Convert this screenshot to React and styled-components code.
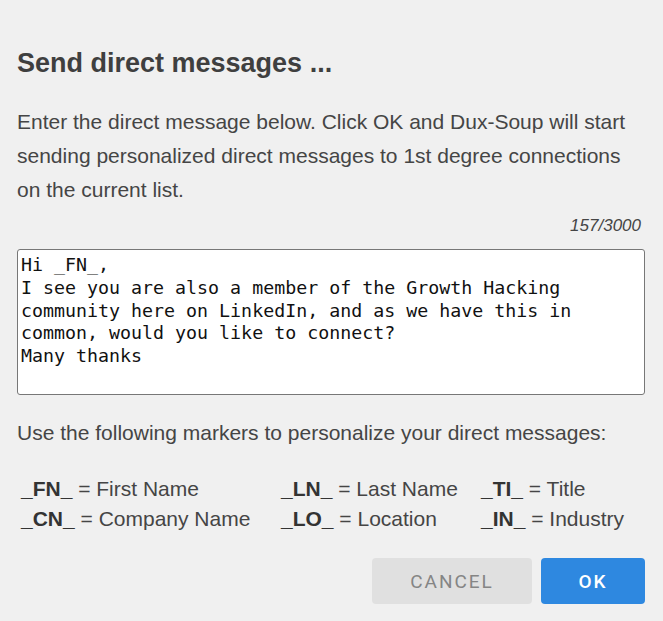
import React, { useState } from "react";
import styled, { createGlobalStyle } from "styled-components";

const GlobalStyle = createGlobalStyle`
  html, body {
    margin: 0;
    padding: 0;
    background: #f0f0f0;
  }
`;

const markers = [
  { code: "_FN_", label: "First Name" },
  { code: "_LN_", label: "Last Name" },
  { code: "_TI_", label: "Title" },
  { code: "_CN_", label: "Company Name" },
  { code: "_LO_", label: "Location" },
  { code: "_IN_", label: "Industry" },
];

const initialText =
  "Hi _FN_,\nI see you are also a member of the Growth Hacking community here on LinkedIn, and as we have this in common, would you like to connect?\nMany thanks ";

const App = () => {
  const [text, setText] = useState(initialText);

  return (
    <>
      <GlobalStyle />
      <Dialog>
        <Title>Send direct messages ...</Title>
        <Intro>
          Enter the direct message below. Click OK and Dux-Soup will start
          sending personalized direct messages to 1st degree connections on the
          current list.
        </Intro>
        <Counter>{text.length}/3000</Counter>
        <MessageBox
          value={text}
          onChange={(e) => setText(e.target.value)}
          spellCheck={false}
        />
        <Hint>Use the following markers to personalize your direct messages:</Hint>
        <MarkerGrid>
          {markers.map((m) => (
            <Marker key={m.code}>
              <b>{m.code}</b> = {m.label}
            </Marker>
          ))}
        </MarkerGrid>
        <Actions>
          <Button>CANCEL</Button>
          <Button primary>OK</Button>
        </Actions>
      </Dialog>
    </>
  );
};

const Dialog = styled.div`
  box-sizing: border-box;
  width: 663px;
  height: 621px;
  padding: 45px 18px 0 17px;
  font-family: "Liberation Sans", Arial, sans-serif;
  color: #454545;
  display: flex;
  flex-direction: column;
`;

const Title = styled.h1`
  margin: 0;
  font-size: 27px;
  line-height: 36px;
  font-weight: 700;
  color: #3f3f3f;
`;

const Intro = styled.p`
  margin: 24px 0 0;
  font-size: 21px;
  line-height: 34px;
`;

const Counter = styled.div`
  margin-top: 9px;
  margin-right: 4px;
  text-align: right;
  font-size: 17px;
  font-style: italic;
  line-height: 20px;
`;

const MessageBox = styled.textarea`
  box-sizing: border-box;
  display: block;
  margin-top: 13px;
  width: 628px;
  height: 146px;
  padding: 4px 3px;
  border: 1px solid #777;
  border-radius: 3px;
  background: #fff;
  resize: none;
  outline: none;
  font-family: "DejaVu Sans Mono", "Liberation Mono", monospace;
  font-size: 18.3px;
  line-height: 22.8px;
  color: #111;
`;

const Hint = styled.p`
  margin: 23px 0 0;
  font-size: 21px;
  line-height: 30px;
`;

const MarkerGrid = styled.div`
  margin-top: 26px;
  padding-left: 4px;
  display: grid;
  grid-template-columns: 260px 200px auto;
  font-size: 21px;
  line-height: 30px;
`;

const Marker = styled.div`
  white-space: nowrap;
  b {
    color: #333;
  }
`;

const Actions = styled.div`
  margin-top: 24px;
  display: flex;
  justify-content: flex-end;
  gap: 9px;
`;

const Button = styled.button`
  height: 46px;
  width: ${({ primary }) => (primary ? "104px" : "160px")};
  border: none;
  border-radius: 4px;
  background: ${({ primary }) => (primary ? "#2e88e0" : "#e0e0e0")};
  color: ${({ primary }) => (primary ? "#fff" : "#858585")};
  font-family: Roboto, "Liberation Sans", sans-serif;
  font-size: 19px;
  font-weight: ${({ primary }) => (primary ? 500 : 400)};
  letter-spacing: 2px;
  cursor: pointer;
`;

export default App;
